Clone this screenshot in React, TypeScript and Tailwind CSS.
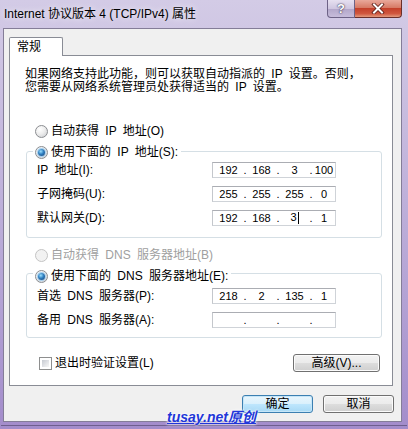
import React from "react";

function Radio({ checked = false, disabled = false }: { checked?: boolean; disabled?: boolean }) {
  return (
    <div
      className={
        "w-[13px] h-[13px] shrink-0 rounded-full border flex items-center justify-center " +
        (disabled
          ? "border-[#c4c4c4] bg-[#f2f2f2]"
          : "border-[#8b8d91] bg-[radial-gradient(circle_at_35%_30%,#ffffff_0%,#eeeeee_45%,#c9cbcf_100%)]")
      }
    >
      {checked && (
        <div className="w-[7px] h-[7px] rounded-full bg-[radial-gradient(circle_at_40%_35%,#9be0ff_0%,#2f7fc0_45%,#163f73_100%)] shadow-[0_0_1px_1px_#9ccbee]" />
      )}
    </div>
  );
}

function Checkbox() {
  return (
    <div className="w-[13px] h-[13px] shrink-0 border border-[#8e8f8f] bg-white p-[2px]">
      <div className="w-full h-full bg-[linear-gradient(135deg,#c6cad1_0%,#e4e6e9_60%,#f7f7f7_100%)]" />
    </div>
  );
}

function IpBox({ v, caretAt }: { v: string[]; caretAt?: number }) {
  const f = (i: number, last = false) => (
    <div className={(last ? "flex-1" : "w-[29px]") + " text-center whitespace-pre"}>
      {v[i]}
      {caretAt === i && <span className="inline-block w-px h-[12px] bg-black align-middle ml-[1px] -mt-[2px]" />}
    </div>
  );
  const dot = <div className="w-[4px] text-center">.</div>;
  return (
    <div className="w-[124px] h-[16px] border border-[#cfd3d8] border-t-[#abadb3] border-l-[#c4c7cc] bg-white flex items-center pl-[1px] font-['Liberation_Sans',sans-serif] text-[11px] leading-none text-black">
      {f(0)}
      {dot}
      {f(1)}
      {dot}
      {f(2)}
      {dot}
      {f(3, true)}
    </div>
  );
}

function Row({ label, v, caretAt }: { label: string; v: string[]; caretAt?: number }) {
  return (
    <div className="h-[16px] flex items-center">
      <div className="w-[175px] whitespace-pre">{label}</div>
      <IpBox v={v} caretAt={caretAt} />
    </div>
  );
}

function WinButton({ label, primary = false, w }: { label: string; primary?: boolean; w: string }) {
  return (
    <div
      className={
        w +
        " h-[18px] rounded-[3px] border flex items-center justify-center text-[12px] leading-none " +
        (primary
          ? "border-[#3c7fb1] bg-[linear-gradient(to_bottom,#eaf6fd_0%,#d9f0fc_50%,#bee6fd_51%,#a7d9f5_100%)] shadow-[inset_0_0_0_1px_#c6e6f8]"
          : "border-[#707070] bg-[linear-gradient(to_bottom,#f2f2f2_0%,#ebebeb_50%,#dddddd_51%,#cfcfcf_100%)] shadow-[inset_0_0_0_1px_#fbfbfb]")
      }
    >
      {label}
    </div>
  );
}

export default function App() {
  return (
    <div className="relative w-[408px] h-[429px] overflow-hidden flex flex-col bg-[linear-gradient(to_bottom,#d3cbe6_0%,#c6bade_30%,#b3a2d4_70%,#a38ccb_100%)] font-['Liberation_Sans','Noto_Sans_CJK_SC',sans-serif] text-black [word-spacing:3px]">
      {/* title bar */}
      <div className="h-[28px] flex items-center pl-[4px] text-[12px] [word-spacing:0px] [text-shadow:0_0_6px_rgba(255,255,255,0.95)]">
        Internet 协议版本 4 (TCP/IPv4) 属性
      </div>

      {/* caption buttons */}
      <div className="absolute top-0 right-[6px] flex">
        <div className="w-[28px] h-[18px] rounded-bl-[4px] border border-t-0 border-[#6d6286] bg-[linear-gradient(to_bottom,#e6e0f0_0%,#cfc6e0_50%,#b2a6c9_51%,#c7bcdb_100%)] flex items-center justify-center text-[13px] font-bold text-white leading-none [text-shadow:0_0_2px_#3a3250,0_0_1px_#3a3250]">
          ?
        </div>
        <div className="w-[47px] h-[18px] rounded-br-[4px] border border-l-0 border-t-0 border-[#6a2f2a] bg-[linear-gradient(to_bottom,#e9a89b_0%,#d77a66_45%,#c4402b_50%,#d0573f_80%,#e39a7e_100%)] flex items-center justify-center">
          <svg width="14" height="11" viewBox="0 0 14 11">
            <path d="M3 1.5 L11 9.5 M11 1.5 L3 9.5" stroke="#5a1c16" strokeWidth="3.6" strokeLinecap="square" />
            <path d="M3 1.5 L11 9.5 M11 1.5 L3 9.5" stroke="#ffffff" strokeWidth="2" strokeLinecap="square" />
          </svg>
        </div>
      </div>

      {/* client area */}
      <div className="ml-[3px] mr-[6px] h-[394px] border border-[#847d98] bg-[#f0f0f0] flex flex-col pt-[8px] pl-[5px] pr-[7px] text-[12px]">
        {/* tab */}
        <div className="relative z-10 w-[54px] h-[19px] -mb-px border border-b-0 border-[#898c95] rounded-t-[2px] bg-white flex items-center pl-[7px] leading-none">
          常规
        </div>
        {/* panel */}
        <div className="w-[384px] h-[331px] border border-[#898c95] bg-white flex flex-col">
          <p className="mt-[12px] ml-[15px] leading-[13px]">
            如果网络支持此功能，则可以获取自动指派的 IP 设置。否则，
            <br />
            您需要从网络系统管理员处获得适当的 IP 设置。
          </p>

          <div className="mt-[29px] ml-[25px] h-[16px] flex items-center gap-[3px]">
            <Radio />
            <span>自动获得 IP 地址(O)</span>
          </div>

          <div className="relative mt-[12px] ml-[16px] w-[356px] h-[87px] border border-[#d5dfe5] rounded-[3px] pt-[10px] pl-[10px] flex flex-col gap-[8px]">
            <div className="absolute top-[-8px] left-[6px] h-[16px] bg-white pl-[2px] pr-[3px] flex items-center gap-[3px]">
              <Radio checked />
              <span>使用下面的 IP 地址(S):</span>
            </div>
            <Row label="IP 地址(I):" v={["192", "168", "3", "100"]} />
            <Row label="子网掩码(U):" v={["255", "255", "255", "0"]} />
            <Row label="默认网关(D):" v={["192", "168", "3", "1"]} caretAt={2} />
          </div>

          <div className="mt-[9px] ml-[25px] h-[16px] flex items-center gap-[3px] text-[#a0a0a0]">
            <Radio disabled />
            <span>自动获得 DNS 服务器地址(B)</span>
          </div>

          <div className="relative mt-[10px] ml-[16px] w-[356px] h-[65px] border border-[#d5dfe5] rounded-[3px] pt-[14px] pl-[10px] flex flex-col gap-[8px]">
            <div className="absolute top-[-6px] left-[6px] h-[16px] bg-white pl-[2px] pr-[3px] flex items-center gap-[3px]">
              <Radio checked />
              <span>使用下面的 DNS 服务器地址(E):</span>
            </div>
            <Row label="首选 DNS 服务器(P):" v={["218", "2", "135", "1"]} />
            <Row label="备用 DNS 服务器(A):" v={["", "", "", ""]} />
          </div>

          <div className="mt-[16px] h-[18px] flex items-center justify-between pl-[29px] pr-[12px]">
            <div className="flex items-center gap-[3px]">
              <Checkbox />
              <span>退出时验证设置(L)</span>
            </div>
            <WinButton label="高级(V)..." w="w-[87px]" />
          </div>
        </div>

        {/* bottom buttons */}
        <div className="mt-[9px] flex justify-end gap-[10px]">
          <WinButton label="确定" primary w="w-[71px]" />
          <WinButton label="取消" w="w-[71px]" />
        </div>
      </div>

      {/* bottom frame line */}
      <div className="mt-[3px] mx-[1px] h-px bg-[#6e5f8e]" />

      {/* watermark */}
      <div className="absolute left-[167px] top-[409px] text-[14px] leading-[16px] font-bold italic underline text-[#2136d8] [word-spacing:0px] [text-shadow:0_0_3px_#ffffff,0_0_2px_#ffffff]">
        tusay.net原创
      </div>
    </div>
  );
}
